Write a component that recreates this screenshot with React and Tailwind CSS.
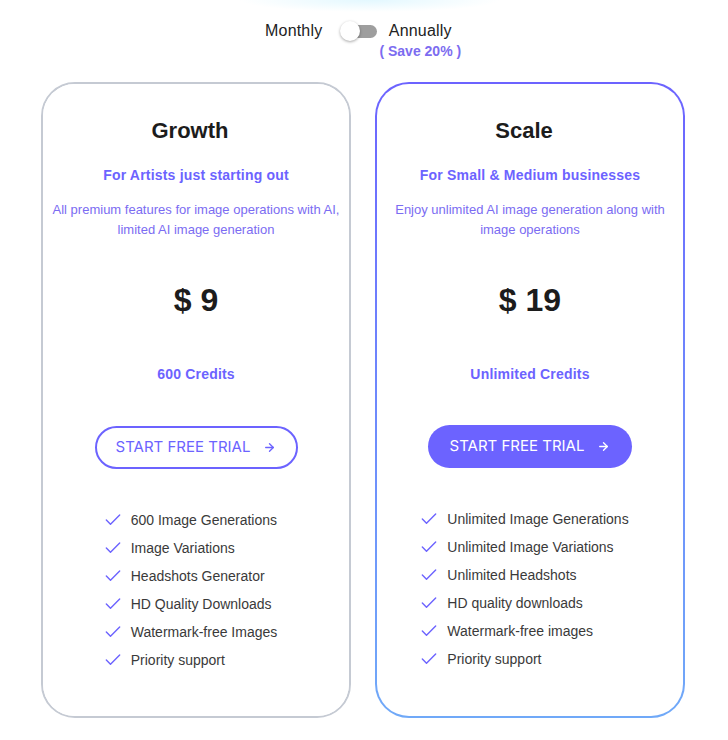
import React from "react";

const Check = () => (
  <svg width="20" height="20" viewBox="0 0 24 24" fill="none" stroke="#6c63ff" strokeWidth="1.7" strokeLinecap="round" strokeLinejoin="round" className="-ml-[3px] -mr-[3px]">
    <path d="M20 6 9 17l-5-5" />
  </svg>
);

const Arrow = ({ color }) => (
  <svg width="13" height="13" viewBox="0 0 24 24" fill="none" stroke={color} strokeWidth="2.5" strokeLinecap="round" strokeLinejoin="round">
    <path d="M5 12h14" />
    <path d="m12 5 7 7-7 7" />
  </svg>
);

function CardBody({ title, subtitle, desc, price, credits, filled, features }) {
  return (
    <div className="flex flex-col items-center h-full bg-white rounded-[32px] pt-[33px]">
      <div className="mr-[12px] h-[28px] leading-[28px] text-[22px] font-bold text-[#1c1c1c]">{title}</div>
      <div className="mt-[20px] h-[20px] leading-[20px] text-[14px] font-bold text-[#6c63ff] tracking-[0.2px]">{subtitle}</div>
      <div className="mt-[15px] leading-[20px] text-[13px] text-[#7b6cf2] text-center whitespace-nowrap">{desc}</div>
      <div className="mt-[40px] h-[40px] leading-[40px] text-[32px] font-bold text-[#1c1c1c]">{price}</div>
      <div className="mt-[44px] h-[20px] leading-[20px] text-[14px] font-bold text-[#6c63ff] tracking-[0.2px]">{credits}</div>
      {filled ? (
        <button className="mt-[41px] h-[43px] w-[204px] rounded-full bg-[#6c63ff] text-white flex items-center justify-center gap-[13px] font-['Inter',sans-serif] text-[15px]">
          <span>START FREE TRIAL</span>
          <Arrow color="#ffffff" />
        </button>
      ) : (
        <button className="mt-[42px] h-[43px] w-[203px] rounded-full border-2 border-[#6c63ff] bg-white text-[#6c63ff] flex items-center justify-center gap-[13px] font-['Inter',sans-serif] text-[15px]">
          <span>START FREE TRIAL</span>
          <Arrow color="#6c63ff" />
        </button>
      )}
      <ul className="mt-[37px] mr-[9px] flex flex-col">
        {features.map((f) => (
          <li key={f} className="h-[28px] flex items-center gap-[11px] text-[14px] text-[#3a3a3a]">
            <Check />
            <span>{f}</span>
          </li>
        ))}
      </ul>
    </div>
  );
}

export default function App() {
  return (
    <div className="w-[728px] min-h-[740px] bg-white font-['Liberation_Sans',Arial,sans-serif] bg-[radial-gradient(ellipse_130px_12px_at_370px_0px,#e3f8ff,rgba(255,255,255,0))] bg-no-repeat">
      <div className="pt-[21px] pl-[265px] flex items-start">
        <div className="h-[20px] leading-[20px] text-[16px] text-[#222] tracking-[0.2px]">Monthly</div>
        <div className="ml-[18px] h-[20px] w-[38px] relative flex items-center">
          <div className="h-[13px] w-[36px] rounded-full bg-[#9e9e9e] ml-[1px]"></div>
          <div className="absolute left-[0px] top-[0px] w-[20px] h-[20px] rounded-full bg-white shadow-[0_1px_3px_rgba(0,0,0,0.35)]"></div>
        </div>
        <div className="ml-[1px] flex flex-col items-center">
          <div className="h-[20px] leading-[20px] text-[16px] text-[#222] tracking-[0.2px]">Annually</div>
          <div className="h-[20px] leading-[20px] text-[14px] font-bold text-[#7c6cf0]">( Save 20% )</div>
        </div>
      </div>
      <div className="mt-[21px] pl-[41px] flex gap-[24px]">
        <div className="w-[310px] h-[636px] rounded-[34px] border-2 border-[#c5cad3] bg-white">
          <div className="h-full rounded-[32px]">
            <CardBody
              title="Growth"
              subtitle="For Artists just starting out"
              desc={<>All premium features for image operations with AI,<br />limited AI image generation</>}
              price="$ 9"
              credits="600 Credits"
              filled={false}
              features={[
                "600 Image Generations",
                "Image Variations",
                "Headshots Generator",
                "HD Quality Downloads",
                "Watermark-free Images",
                "Priority support",
              ]}
            />
          </div>
        </div>
        <div className="w-[310px] h-[636px] rounded-[34px] p-[2px] bg-gradient-to-b from-[#6c63ff] to-[#70a9f8]">
          <CardBody
            title="Scale"
            subtitle="For Small & Medium businesses"
            desc={<>Enjoy unlimited AI image generation along with<br />image operations</>}
            price="$ 19"
            credits="Unlimited Credits"
            filled={true}
            features={[
              "Unlimited Image Generations",
              "Unlimited Image Variations",
              "Unlimited Headshots",
              "HD quality downloads",
              "Watermark-free images",
              "Priority support",
            ]}
          />
        </div>
      </div>
    </div>
  );
}
